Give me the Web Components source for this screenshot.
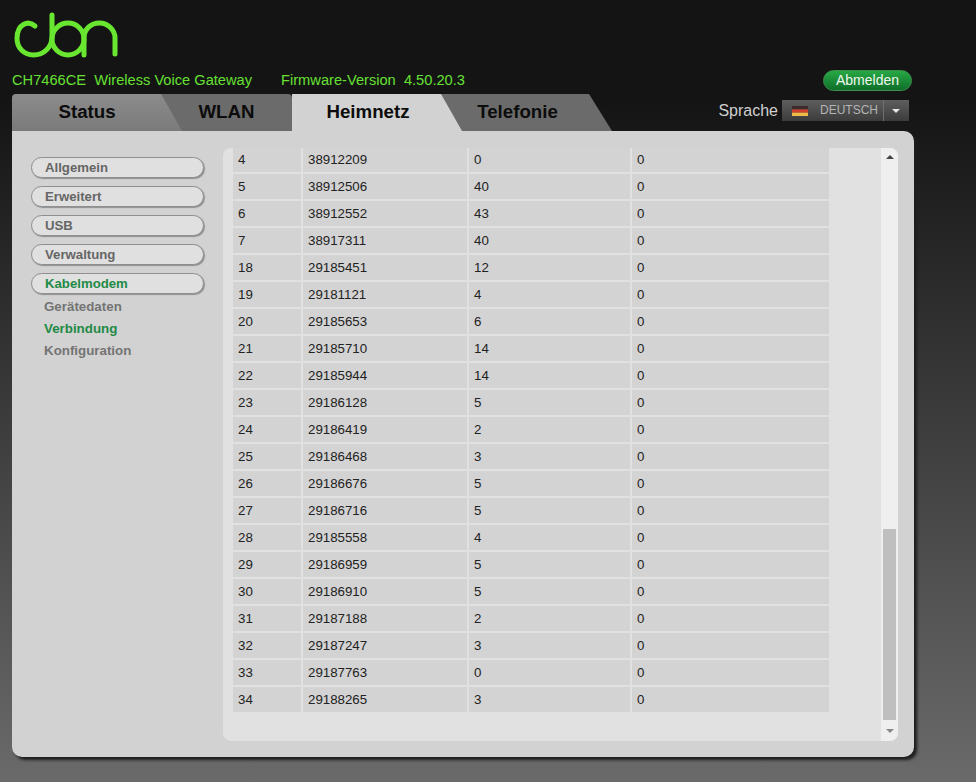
<!DOCTYPE html>
<html lang="de">
<head>
<meta charset="utf-8">
<title>CH7466CE</title>
<style>
  html, body { margin: 0; height: 782px; overflow: hidden; }
  body {
    background: linear-gradient(#141414 0, #141414 100px, #6a6a6a 782px);
    font-family: "Liberation Sans", Arial, sans-serif;
  }
</style>
</head>
<body>
<cbn-header></cbn-header>
<cbn-nav>
  <cbn-tab kind="first">Status</cbn-tab>
  <cbn-tab kind="second">WLAN</cbn-tab>
  <cbn-tab kind="active">Heimnetz</cbn-tab>
  <cbn-tab kind="last">Telefonie</cbn-tab>
  <cbn-lang slot="right"></cbn-lang>
</cbn-nav>
<cbn-panel>
  <cbn-menu slot="side">
    <cbn-pill>Allgemein</cbn-pill>
    <cbn-pill>Erweitert</cbn-pill>
    <cbn-pill>USB</cbn-pill>
    <cbn-pill>Verwaltung</cbn-pill>
    <cbn-pill active>Kabelmodem</cbn-pill>
    <cbn-subitem>Gerätedaten</cbn-subitem>
    <cbn-subitem active>Verbindung</cbn-subitem>
    <cbn-subitem>Konfiguration</cbn-subitem>
  </cbn-menu>
  <cbn-table></cbn-table>
</cbn-panel>

<script>
class CbnHeader extends HTMLElement {
  constructor() {
    super();
    this.attachShadow({mode: 'open'}).innerHTML = `
    <style>
      :host { display: block; height: 94px; padding: 0 64px 0 12px; box-sizing: border-box; }
      svg { display: block; height: 70px; width: 120px; }
      .info { display: flex; align-items: center; height: 21px; color: #66e033; font-size: 14.650px; }
      .info > span:not(.logout) { position: relative; top: -1px; }
      .gap { width: 29px; }
      .logout {
        margin-left: auto; width: 89px; height: 21px; box-sizing: border-box;
        border-radius: 11px; border: 1px solid #3d8f4c;
        background: linear-gradient(#27a844, #0f6f2a);
        color: #eef7ee; text-align: center; line-height: 18px; font-size: 14px;
      }
    </style>
    <svg viewBox="12 0 120 70" fill="none" stroke="#68e630" stroke-width="5" stroke-linecap="round">
      <path d="M35 26 C31 22.500 27 22.500 23.500 24.500 C19 27 17 32 17 38.500 C17 48 24 55 33.500 55 C44 55 52 47 52 37 L52 15"/>
      <circle cx="68" cy="39" r="16"/>
      <path d="M84 55 L84 38 C84 29 91 23 99.500 23 C108 23 115 30 115 38 L115 54"/>
    </svg>
    <div class="info">
      <span>CH7466CE&nbsp; Wireless Voice Gateway</span>
      <span class="gap"></span>
      <span>Firmware-Version&nbsp; 4.50.20.3</span>
      <span class="logout">Abmelden</span>
    </div>`;
  }
}

class CbnNav extends HTMLElement {
  constructor() {
    super();
    this.attachShadow({mode: 'open'}).innerHTML = `
    <style>
      :host { display: flex; height: 37px; padding: 0 67px 0 12px; }
      .tabs { display: flex; }
      .right { margin-left: auto; }
    </style>
    <div class="tabs"><slot></slot></div>
    <div class="right"><slot name="right"></slot></div>`;
  }
}

class CbnTab extends HTMLElement {
  constructor() {
    super();
    this.attachShadow({mode: 'open'}).innerHTML = `
    <style>
      :host {
        display: flex; justify-content: center; align-items: center; height: 37px;
        box-sizing: border-box; font-size: 18.700px; font-weight: bold; color: #0c0c0c;
        padding-bottom: 2px; position: relative;
      }
      :host([kind=first]) {
        width: 170px; padding-right: 20px; z-index: 2; border-radius: 4px 0 0 0;
        background: linear-gradient(#8c8c8c, #7a7a7a);
        clip-path: polygon(0 0, 149px 0, 170px 37px, 0 37px);
      }
      :host([kind=second]) {
        width: 132px; margin-left: -22px; padding-left: 1px; border-radius: 0 4px 0 0;
        background: #6b6b6b;
      }
      :host([kind=active]) {
        width: 170px; padding-right: 18px; z-index: 2; background: #d2d2d2;
        clip-path: polygon(0 0, 149px 0, 170px 37px, 0 37px);
      }
      :host([kind=last]) {
        width: 171px; margin-left: -21px; padding-right: 18px;
        background: #6b6b6b;
        clip-path: polygon(0 0, 148px 0, 171px 37px, 0 37px);
      }
    </style>
    <slot></slot>`;
  }
}

class CbnLang extends HTMLElement {
  constructor() {
    super();
    this.attachShadow({mode: 'open'}).innerHTML = `
    <style>
      :host { display: flex; align-items: center; margin-top: 6px; height: 21px; }
      .label { color: #cfcfcf; font-size: 16px; margin-right: 4px; }
      .box {
        display: flex; align-items: center; width: 127px; height: 21px;
        background: linear-gradient(#5e5e5e, #3c3c3c); color: #b4b4b4; font-size: 12px;
      }
      .flag { width: 16px; height: 10px; margin: 0 12px 0 10px; display: block; }
      .text { width: 63px; position: relative; top: -1px; }
      .sep { width: 1px; height: 21px; background: #6f6f6f; }
      .caret {
        margin-left: 8px; width: 0; height: 0;
        border-left: 4px solid transparent; border-right: 4px solid transparent; border-top: 4px solid #e6e6e6;
      }
    </style>
    <span class="label">Sprache</span>
    <div class="box">
      <svg class="flag" viewBox="0 0 16 10">
        <rect width="16" height="3.400" fill="#3a2c2c"/>
        <rect y="3.400" width="16" height="3.300" fill="#d0402e"/>
        <rect y="6.700" width="16" height="3.300" fill="#f0bc48"/>
      </svg>
      <span class="text">DEUTSCH</span>
      <span class="sep"></span>
      <span class="caret"></span>
    </div>`;
  }
}

class CbnPanel extends HTMLElement {
  constructor() {
    super();
    this.attachShadow({mode: 'open'}).innerHTML = `
    <style>
      :host {
        display: flex; gap: 19px; width: 902px; height: 626px; margin-left: 12px;
        box-sizing: border-box; padding: 17px 16px 16px 19px;
        background: #d2d2d2; border-radius: 0 10px 10px 10px;
        box-shadow: 3px 3px 3px #1e1e1e;
      }
    </style>
    <slot name="side"></slot>
    <slot></slot>`;
  }
}

class CbnMenu extends HTMLElement {
  constructor() {
    super();
    this.attachShadow({mode: 'open'}).innerHTML = `
    <style>
      :host { display: flex; flex-direction: column; width: 173px; flex: none; padding-top: 9px; box-sizing: border-box; }
    </style>
    <slot></slot>`;
  }
}

class CbnPill extends HTMLElement {
  constructor() {
    super();
    this.attachShadow({mode: 'open'}).innerHTML = `
    <style>
      :host {
        display: block; height: 21px; margin-bottom: 8px; box-sizing: border-box;
        padding-left: 13px; line-height: 19px; font-size: 13.200px; font-weight: bold; color: #666;
        background: #e0e0e0; border: 1px solid #8f8f8f; border-radius: 11px;
        box-shadow: 1px 1px 1px #8f8f8f;
      }
      :host([active]) { color: #1f8a45; }
    </style>
    <slot></slot>`;
  }
}

class CbnSubitem extends HTMLElement {
  constructor() {
    super();
    this.attachShadow({mode: 'open'}).innerHTML = `
    <style>
      :host {
        display: block; height: 22px; line-height: 22px; padding-left: 13px;
        font-size: 13.330px; font-weight: bold; color: #747474; position: relative; top: -6px;
      }
      :host([active]) { color: #1f8a45; }
    </style>
    <slot></slot>`;
  }
}

const ROWS = [
  [4, 38912209, 0, 0], [5, 38912506, 40, 0], [6, 38912552, 43, 0], [7, 38917311, 40, 0],
  [18, 29185451, 12, 0], [19, 29181121, 4, 0], [20, 29185653, 6, 0], [21, 29185710, 14, 0],
  [22, 29185944, 14, 0], [23, 29186128, 5, 0], [24, 29186419, 2, 0], [25, 29186468, 3, 0],
  [26, 29186676, 5, 0], [27, 29186716, 5, 0], [28, 29185558, 4, 0], [29, 29186959, 5, 0],
  [30, 29186910, 5, 0], [31, 29187188, 2, 0], [32, 29187247, 3, 0], [33, 29187763, 0, 0],
  [34, 29188265, 3, 0]
];

class CbnTable extends HTMLElement {
  constructor() {
    super();
    const cells = ROWS.map(row => row.map(v => `<div class="cell">${v}</div>`).join('')).join('');
    this.attachShadow({mode: 'open'}).innerHTML = `
    <style>
      :host {
        display: flex; flex: 1; height: 593px; background: #e1e1e1;
        border-radius: 8px; overflow: hidden;
      }
      .area { flex: 1; padding-left: 10px; overflow: hidden; }
      .grid {
        display: grid; grid-template-columns: 68px 164px 161px 197px; gap: 2px;
        width: 596px; margin-top: -1px; font-size: 13.300px; color: #222;
      }
      .cell { background: #d3d3d3; height: 25px; line-height: 25px; padding-left: 5px; box-sizing: border-box; }
      .bar {
        flex: none; width: 17px; display: flex; flex-direction: column; background: #efefef;
        box-sizing: border-box; padding: 0 2px 0 2px;
      }
      .btn { display: flex; justify-content: center; align-items: center; flex: none; height: 17px; }
      .btn.end { height: 21px; }
      .up { border-left: 4px solid transparent; border-right: 4px solid transparent; border-bottom: 4px solid #444; }
      .down { border-left: 4px solid transparent; border-right: 4px solid transparent; border-top: 4px solid #888; }
      .space { flex: 1; }
      .thumb { height: 191px; background: #bfbfbf; flex: none; }
    </style>
    <div class="area"><div class="grid">${cells}</div></div>
    <div class="bar">
      <div class="btn"><span class="up"></span></div>
      <div class="space"></div>
      <div class="thumb"></div>
      <div class="btn end"><span class="down"></span></div>
    </div>`;
  }
}

customElements.define('cbn-header', CbnHeader);
customElements.define('cbn-nav', CbnNav);
customElements.define('cbn-tab', CbnTab);
customElements.define('cbn-lang', CbnLang);
customElements.define('cbn-panel', CbnPanel);
customElements.define('cbn-menu', CbnMenu);
customElements.define('cbn-pill', CbnPill);
customElements.define('cbn-subitem', CbnSubitem);
customElements.define('cbn-table', CbnTable);
</script>
</body>
</html>
